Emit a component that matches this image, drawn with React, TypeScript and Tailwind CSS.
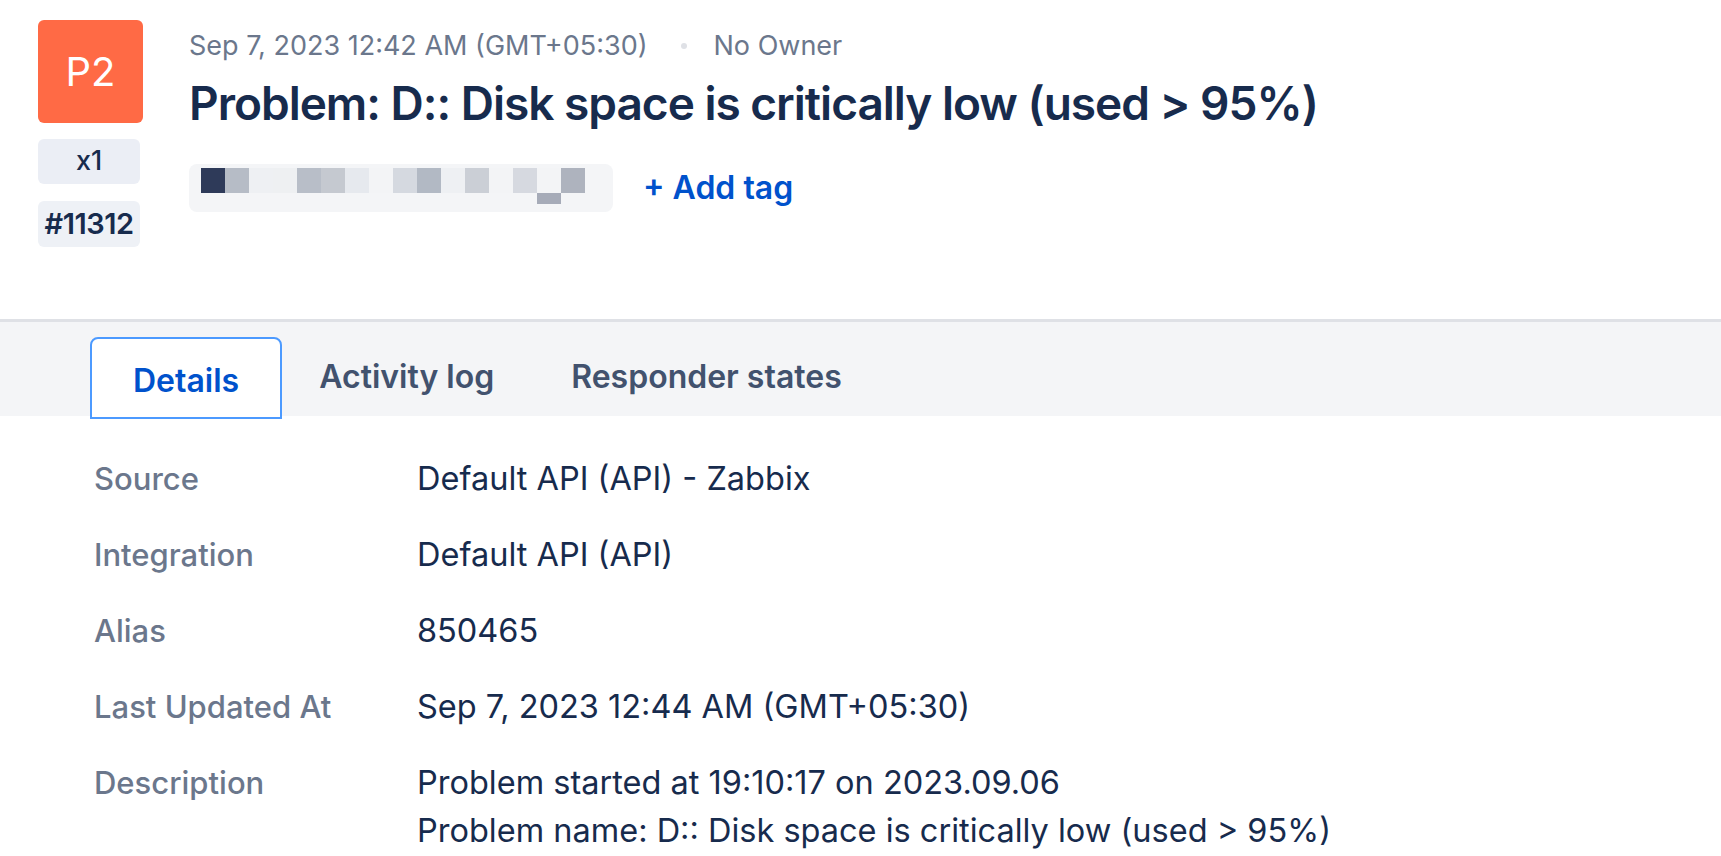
import React from 'react';

const blurTiles = [
  '#2E3A59', '#B6BCC6', '#EEF0F3', '#EEF0F2', '#B8BEC8', '#C5C9D0', '#E6E9EE', '#F3F4F6',
  '#D5D9E0', '#B2B9C4', '#EEF0F3', '#CBCFD6', '#F3F4F6', '#D6D9E0', '#F3F4F6', '#AEB3BE',
];

const rows: { label: string; value: string[] }[] = [
  { label: 'Source', value: ['Default API (API) - Zabbix'] },
  { label: 'Integration', value: ['Default API (API)'] },
  { label: 'Alias', value: ['850465'] },
  { label: 'Last Updated At', value: ['Sep 7, 2023 12:44 AM (GMT+05:30)'] },
  {
    label: 'Description',
    value: ['Problem started at 19:10:17 on 2023.09.06', 'Problem name: D:: Disk space is critically low (used > 95%)'],
  },
];

export default function App() {
  return (
    <div className="min-h-screen w-full bg-white font-['Inter',sans-serif] text-[#172B4D]">
      {/* Header */}
      <header className="flex h-[319px] pl-[38px] pt-[20px]">
        <div className="flex w-[105px] flex-col">
          <div className="flex h-[103px] items-center justify-center rounded-[6px] bg-[#FF6A45] text-[40px] text-white">
            P2
          </div>
          <div className="mt-[16px] flex h-[45px] w-[102px] items-center justify-center rounded-[6px] bg-[#EBEEF5] text-[27px] font-medium">
            x1
          </div>
          <div className="mt-[17px] flex h-[46px] w-[102px] items-center justify-center rounded-[6px] bg-[#EEF1F6] text-[29px] font-semibold tracking-[-0.5px]">
            #11312
          </div>
        </div>

        <div className="ml-[46px] flex flex-col">
          <div className="mt-[10px] flex items-center text-[27px] leading-[32px] text-[#6B778C]">
            <span>Sep 7, 2023 12:42 AM (GMT+05:30)</span>
            <span className="ml-[33px] mr-[27px] h-[6px] w-[6px] rounded-full bg-[#DFE1E6]" />
            <span>No Owner</span>
          </div>
          <h1 className="mt-[11px] text-[46px] font-semibold leading-[60px] tracking-[-1px]">
            Problem: D:: Disk space is critically low (used &gt; 95%)
          </h1>
          <div className="mt-[31px] flex items-center">
            <div className="relative flex h-[48px] w-[424px] rounded-[8px] bg-[#F4F5F7] pl-[12px] pt-[4px]">
              {blurTiles.map((c, i) => (
                <div key={i} className="h-[25px] w-[24px]" style={{ backgroundColor: c }} />
              ))}
              <div className="absolute left-[348px] top-[29px] h-[11px] w-[24px] bg-[#A6ABB8]" />
            </div>
            <button className="ml-[30px] text-[32px] font-semibold text-[#0052CC]">+ Add tag</button>
          </div>
        </div>
      </header>

      {/* Tabs */}
      <nav className="flex h-[97px] items-end border-t-[3px] border-[#DFE1E6] bg-[#F4F5F7] pl-[90px]">
        <div className="relative -mb-[3px] flex h-[82px] items-center rounded-t-[8px] border-2 border-[#4C9AFF] bg-white px-[41px] pt-[6px] text-[32px] font-semibold text-[#0052CC]">
          Details
        </div>
        <div className="flex h-[82px] items-center px-[37px] pt-[4px] text-[32px] font-semibold text-[#42526E]">
          Activity log
        </div>
        <div className="flex h-[82px] items-center px-[40px] pt-[4px] text-[32px] font-semibold text-[#42526E]">
          Responder states
        </div>
      </nav>

      {/* Details */}
      <section className="grid grid-cols-[323px_1fr] gap-y-[28px] pl-[94px] pt-[39px]">
        {rows.map((r) => (
          <React.Fragment key={r.label}>
            <div className="text-[31px] font-medium leading-[48px] text-[#6B778C]">{r.label}</div>
            <div className="text-[32.5px] leading-[48px]">
              {r.value.map((v) => (
                <div key={v}>{v}</div>
              ))}
            </div>
          </React.Fragment>
        ))}
      </section>
    </div>
  );
}
